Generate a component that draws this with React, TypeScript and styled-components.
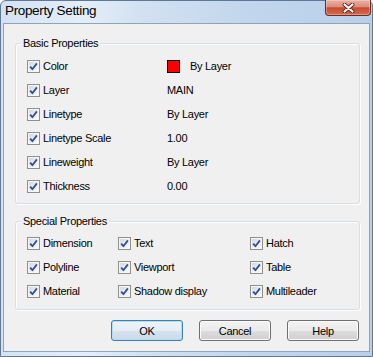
import React from 'react';
import styled, { createGlobalStyle } from 'styled-components';

const GlobalStyle = createGlobalStyle`
  html, body {
    margin: 0;
    padding: 0;
    background: #ffffff;
  }
  body {
    font-family: 'Liberation Sans', Arial, sans-serif;
    color: #000;
  }
`;

const Window = styled.div`
  width: 373px;
  height: 357px;
  box-sizing: border-box;
  display: flex;
  flex-direction: column;
  border: 1px solid #5f7896;
  border-radius: 6px 6px 0 0;
  padding: 0 2px 4px 2px;
  background: linear-gradient(90deg, #d3e2f2 0%, #e4eef8 22%, #d2e1f1 38%, #c2d7ed 65%, #b8cfe9 100%);
`;

const TitleBar = styled.div`
  height: 22px;
  display: flex;
  justify-content: space-between;
  align-items: flex-start;
`;

const TitleText = styled.div`
  padding-left: 2px;
  font-size: 13.5px;
  line-height: 20px;
  letter-spacing: -0.35px;
  color: #000;
`;

const CloseButton = styled.div`
  width: 46px;
  height: 16px;
  margin-top: -1px;
  margin-right: -1px;
  box-sizing: border-box;
  border: 1px solid #6e2b20;
  border-top: none;
  border-radius: 0 0 4px 4px;
  background: linear-gradient(#eab0a2 0%, #dd8d7b 45%, #c9492f 52%, #d46a4e 100%);
  box-shadow: inset 0 0 0 1px rgba(255, 255, 255, 0.3);
  display: flex;
  align-items: center;
  justify-content: center;
`;

const Client = styled.div`
  flex: 1;
  display: flex;
  flex-direction: column;
  border: 1px solid #8fa3ba;
  background: #f0f0f0;
  padding: 19px 9px 0 11px;
`;

const GroupBox = styled.div<{ $gap: number }>`
  position: relative;
  margin-top: ${(p) => p.$gap}px;
  border: 1px solid #d5dfe5;
  border-radius: 3px;
  box-shadow: inset 1px 1px 0 #ffffff, 1px 1px 0 #ffffff;
  font-size: 11px;
  letter-spacing: -0.3px;
`;

const Caption = styled.span`
  position: absolute;
  top: -7px;
  left: 5px;
  padding: 0 2px;
  line-height: 13px;
  background: #f0f0f0;
`;

const BasicList = styled.div`
  display: grid;
  grid-template-columns: 140px 1fr;
  row-gap: 11px;
  padding: 16px 0 10px 11px;
`;

const SpecialList = styled.div`
  display: grid;
  grid-template-columns: 91px 132px 1fr;
  row-gap: 11px;
  padding: 15px 0 11px 11px;
`;

const Check = styled.label`
  display: flex;
  align-items: center;
  gap: 3px;
  height: 13px;
  line-height: 13px;
  white-space: nowrap;
`;

const Box = styled.span`
  width: 13px;
  height: 13px;
  box-sizing: border-box;
  flex: none;
  border: 1px solid #8e8f8f;
  background: linear-gradient(135deg, #cfd3d9 0%, #eceef0 55%, #fafafa 100%);
  box-shadow: inset 0 0 0 1px #f6f6f6;
  display: flex;
  align-items: center;
  justify-content: center;
`;

const Value = styled.div`
  display: flex;
  align-items: center;
  gap: 10px;
  height: 13px;
  line-height: 13px;
`;

const Swatch = styled.span<{ $color: string }>`
  width: 13px;
  height: 13px;
  box-sizing: border-box;
  border: 1px solid #000;
  background: ${(p) => p.$color};
`;

const ButtonRow = styled.div`
  display: flex;
  justify-content: flex-end;
  gap: 16px;
  margin-top: 10px;
  padding-right: 1px;
`;

const Button = styled.button<{ $default?: boolean }>`
  width: 72px;
  height: 21px;
  box-sizing: border-box;
  padding: 0;
  font-family: 'Liberation Sans', Arial, sans-serif;
  font-size: 11px;
  letter-spacing: -0.3px;
  color: #000;
  border-radius: 3px;
  border: 1px solid ${(p) => (p.$default ? '#3c7fb1' : '#707070')};
  background: ${(p) =>
    p.$default
      ? 'linear-gradient(#eef3f8 0%, #e5edf5 50%, #d6e3ef 50%, #cbdae9 100%)'
      : 'linear-gradient(#f2f2f2 0%, #ebebeb 50%, #dddddd 50%, #cfcfcf 100%)'};
  box-shadow: inset 0 0 0 1px ${(p) => (p.$default ? '#b4def6' : '#fbfbfb')};
`;

const CheckMark = () => (
  <svg width="9" height="9" viewBox="0 0 9 9">
    <path d="M1.2 4.6 L3.4 7.2 L7.9 1.4" fill="none" stroke="#2f4f9c" strokeWidth="1.8" strokeLinejoin="round" />
  </svg>
);

const CheckItem: React.FC<{ label: string }> = ({ label }) => (
  <Check>
    <Box>
      <CheckMark />
    </Box>
    {label}
  </Check>
);

const basicRows = [
  { label: 'Color', value: 'By Layer', color: '#ff0000' },
  { label: 'Layer', value: 'MAIN' },
  { label: 'Linetype', value: 'By Layer' },
  { label: 'Linetype Scale', value: '1.00' },
  { label: 'Lineweight', value: 'By Layer' },
  { label: 'Thickness', value: '0.00' }
];

const specialItems = [
  'Dimension', 'Text', 'Hatch',
  'Polyline', 'Viewport', 'Table',
  'Material', 'Shadow display', 'Multileader'
];

const App: React.FC = () => {
  return (
    <>
      <GlobalStyle />
      <Window>
        <TitleBar>
          <TitleText>Property Setting</TitleText>
          <CloseButton>
            <svg width="13" height="10" viewBox="0 0 13 10">
              <path d="M2.5 1.5 L10.5 8.5 M10.5 1.5 L2.5 8.5" stroke="#5a1a12" strokeWidth="3.8" strokeLinecap="round" />
              <path d="M2.5 1.5 L10.5 8.5 M10.5 1.5 L2.5 8.5" stroke="#ffffff" strokeWidth="2.2" strokeLinecap="round" />
            </svg>
          </CloseButton>
        </TitleBar>
        <Client>
          <GroupBox $gap={0}>
            <Caption>Basic Properties</Caption>
            <BasicList>
              {basicRows.map((row) => (
                <React.Fragment key={row.label}>
                  <CheckItem label={row.label} />
                  <Value>
                    {row.color && <Swatch $color={row.color} />}
                    {row.value}
                  </Value>
                </React.Fragment>
              ))}
            </BasicList>
          </GroupBox>
          <GroupBox $gap={17}>
            <Caption>Special Properties</Caption>
            <SpecialList>
              {specialItems.map((item) => (
                <CheckItem key={item} label={item} />
              ))}
            </SpecialList>
          </GroupBox>
          <ButtonRow>
            <Button $default>OK</Button>
            <Button>Cancel</Button>
            <Button>Help</Button>
          </ButtonRow>
        </Client>
      </Window>
    </>
  );
};

export default App;
